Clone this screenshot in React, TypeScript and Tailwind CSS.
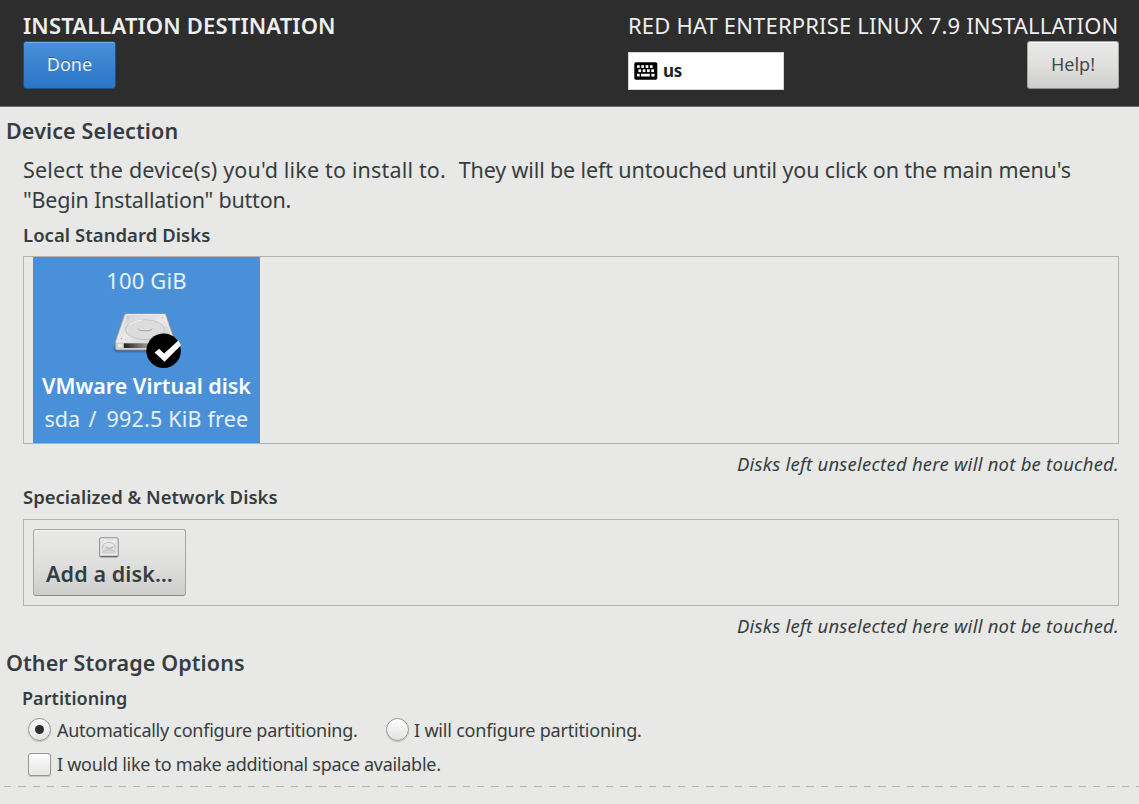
function KeyboardIcon() {
  const top = [0, 1, 2, 3];
  return (
    <svg className="shrink-0" width="24" height="18" viewBox="0 0 24 18">
      <rect x="0.3" y="0.3" width="23" height="17.4" rx="1.6" fill="#000" />
      <g fill="#fff">
        {top.map((i) => (
          <rect key={i} x={3 + i * 4.3} y="3.2" width="2.7" height="2.7" />
        ))}
        {top.map((i) => (
          <rect key={i} x={4.4 + i * 4.3} y="7.3" width="2.7" height="2.8" />
        ))}
        <rect x="3" y="11.8" width="2.7" height="2.7" />
        <rect x="7" y="11.8" width="8.8" height="2.7" />
        <rect x="17.4" y="11.8" width="3.2" height="2.7" />
      </g>
    </svg>
  );
}

function SelectedDiskIcon() {
  return (
    <svg className="block" width="76" height="62" viewBox="109 309 76 62">
      <defs>
        <linearGradient id="lid" x1="0" y1="0" x2="1" y2="1">
          <stop offset="0" stopColor="#cfcfcf" />
          <stop offset="0.5" stopColor="#e9e9e9" />
          <stop offset="1" stopColor="#c4c4c4" />
        </linearGradient>
        <linearGradient id="slot" x1="0" y1="0" x2="1" y2="0">
          <stop offset="0" stopColor="#222" />
          <stop offset="1" stopColor="#aaa" />
        </linearGradient>
        <filter id="soft" x="-20%" y="-100%" width="140%" height="300%">
          <feGaussianBlur stdDeviation="1.2" />
        </filter>
      </defs>
      <rect x="114.5" y="345" width="62" height="6.5" rx="2" fill="#1c3a5c" opacity="0.7" filter="url(#soft)" />
      <path
        d="M126 313.6h38.5q1.2 0 1.7 1.2l8.600 25.500v8q0 1.800-1.800 1.800h-56q-1.800 0-1.800-1.800v-7l9-26.300q.5-1.400 1.800-1.400z"
        fill="#d6d6d6"
        stroke="#85888b"
        strokeWidth="0.8"
      />
      <path d="M126.5 314.5h37.6l9.4 27.8h-56.6z" fill="url(#lid)" stroke="#f3f3f3" strokeWidth="0.8" />
      <ellipse cx="145" cy="329.6" rx="19.5" ry="10" fill="#dcdcdc" stroke="#bcbcbc" strokeWidth="0.8" />
      <path d="M129 325q5-4.6 14-5" fill="none" stroke="#f0f0f0" strokeWidth="1.2" />
      <path d="M138 328.6q0 2.2 7 2.2t7.4-2.2" fill="none" stroke="#9c9c9c" strokeWidth="0.9" />
      <circle cx="128" cy="318" r="0.7" fill="#aaa" />
      <circle cx="162.5" cy="318" r="0.7" fill="#aaa" />
      <circle cx="121.5" cy="338.5" r="0.8" fill="#aaa" />
      <path d="M116.4 342.8h57.5v5.4h-57.5z" fill="#bdbdbd" />
      <path d="M117.5 343.6h5v4h-5z" fill="#e8e8e8" />
      <path d="M124 343.4h27v4.6h-27z" fill="url(#slot)" />
      <circle cx="163.6" cy="350.8" r="17.3" fill="#000" />
      <path d="M154.6 352.4l4.5-3.7 5 4.7 14.3-12.9 2.6 4.7-16.500 16.500z" fill="#fff" />
    </svg>
  );
}

function SmallDiskIcon() {
  return (
    <svg className="-ml-[2px] block" width="20" height="21" viewBox="0 0 20 21">
      <defs>
        <linearGradient id="smallLid" x1="0" y1="0" x2="0" y2="1">
          <stop offset="0" stopColor="#f6f6f6" />
          <stop offset="1" stopColor="#d2d2d2" />
        </linearGradient>
      </defs>
      <rect x="0.6" y="0.8" width="18.6" height="19.2" rx="2" fill="#f1f1f1" stroke="#8c8e8c" strokeWidth="1.1" />
      <path d="M2 19.4h16" stroke="#6c6e6c" strokeWidth="1.4" />
      <rect x="3" y="3" width="13.8" height="13.6" rx="1" fill="url(#smallLid)" stroke="#d0d0d0" strokeWidth="0.8" />
      <path d="M3.8 11.5V9.5Q4.8 5.5 10 5.5t6 4V11.5" fill="none" stroke="#b9b9b9" />
      <path d="M7 9.5q0 1.700 3 1.700t4-1.700" fill="none" stroke="#a9a9a9" />
      <path d="M4 15q1.500-2.600 6-2.300t6 2.300" fill="none" stroke="#bebebe" />
    </svg>
  );
}

const lightButton =
  "rounded-[3px] border border-[#a5a6a3] border-b-[#8e8f8c] bg-linear-to-b from-[#e9e9e8] via-[#e0e0df] to-[#cdcdcb] shadow-[inset_0_1px_0_#f7f7f7]";

function Radio({ checked }: { checked?: boolean }) {
  return (
    <span className="-mt-px flex size-[23px] shrink-0 items-center justify-center rounded-full border border-[#949692] bg-linear-to-b from-[#fdfdfd] to-[#e3e3e2] shadow-[0_1px_1px_#c4c4c2]">
      {checked && <span className="size-[9px] rounded-full bg-[#2a3033]" />}
    </span>
  );
}

export default function App() {
  return (
    <div className="flex h-[804px] w-[1139px] flex-col overflow-hidden bg-[#e8e8e6] font-['Noto_Sans',sans-serif] text-[#363d40]">
      <header className="flex h-[107px] shrink-0 justify-between border-b border-[#6c6c6b] bg-[#2d2d2d] pt-[10px] pr-5 pl-[23px] text-[#efefef]">
        <div>
          <h1 className="text-[22px] leading-[30px] font-semibold tracking-[0.15px] whitespace-nowrap">
            INSTALLATION DESTINATION
          </h1>
          <button className="mt-px block h-12 w-[93px] rounded-[3px] border border-[#1c5187] bg-linear-to-b from-[#4a90d9] to-[#2a76c6] pb-[2px] text-[18px] leading-[44px] text-[#e9f1fa] shadow-[inset_0_1px_0_#76ace4] [text-shadow:0_-1px_0_#2d609b]">
            Done
          </button>
        </div>
        <div className="w-[491px]">
          <div className="text-[22px] leading-[30px] tracking-[0.17px] whitespace-nowrap">
            RED HAT ENTERPRISE LINUX 7.9 INSTALLATION
          </div>
          <div className="mt-px flex items-start justify-between">
            <div className="mt-[11px] flex h-[38px] w-[156px] items-center gap-[5px] border border-[#d5d5d5] bg-white pl-[5px] text-[17px] font-bold text-[#222]">
              <KeyboardIcon />
              <span className="tracking-[-0.3px]">us</span>
            </div>
            <button className={`${lightButton} h-12 w-[92px] pb-[2px] text-[18px] leading-[44px] text-[#42494b]`}>
              Help!
            </button>
          </div>
        </div>
      </header>

      <main className="flex flex-col pt-[9px] pr-5 pl-[23px] whitespace-nowrap">
        <h2 className="-ml-[17px] text-[21.5px] leading-[30px] font-semibold tracking-[0.12px]">Device Selection</h2>
        <div className="mt-[9px] text-[21.5px] leading-[30px]">
          <p className="flex justify-between pr-[48px]">
            <span className="tracking-[0.17px]">Select the device(s) you'd like to install to.</span>
            <span className="tracking-[-0.13px]">They will be left untouched until you click on the main menu's</span>
          </p>
          <p className="tracking-[-0.22px]">"Begin Installation" button.</p>
        </div>

        <h3 className="mt-2 text-[18.5px] leading-6 font-semibold tracking-[0.05px]">Local Standard Disks</h3>
        <section className="mt-[9px] flex h-[188px] border border-[#b3b4b1] pl-[9px]">
          <div className="flex w-[227px] flex-col items-center bg-[#4a90d9] pt-[9px] text-[21.5px] leading-[30px] text-[#e8f1fb]">
            <span className="-mt-px pb-px text-[22px] tracking-[0.15px]">100 GiB</span>
            <div className="mt-[13px] h-[62px]">
              <SelectedDiskIcon />
            </div>
            <span className="font-semibold tracking-[-0.03px] text-white">VMware Virtual disk</span>
            <span className="mt-[3px] flex">
              <span className="w-[44px]">sda</span>
              <span className="w-[18px]">/</span>
              <span className="tracking-[0.2px]">992.5 KiB free</span>
            </span>
          </div>
        </section>
        <p className="mt-2 text-right text-[18.5px] leading-6 tracking-[0.23px] italic">
          Disks left unselected here will not be touched.
        </p>

        <h3 className="mt-[9px] text-[18.5px] leading-6 font-semibold">
          Specialized &amp; Network Disks
        </h3>
        <section className="mt-[10px] flex h-[87px] border border-[#b3b4b1] pt-[9px] pl-[9px]">
          <button className={`${lightButton} flex h-[67px] w-[153px] flex-col items-center pt-[7px]`}>
            <SmallDiskIcon />
            <span className="mt-px text-[21.5px] leading-[30px] font-semibold tracking-[0.1px]">Add a disk…</span>
          </button>
        </section>
        <p className="mt-2 text-right text-[18.5px] leading-6 tracking-[0.23px] italic">
          Disks left unselected here will not be touched.
        </p>

        <h2 className="mt-[10px] -ml-[17px] text-[21.5px] leading-[30px] font-semibold tracking-[0.1px]">
          Other Storage Options
        </h2>
        <h3 className="mt-2 -ml-px text-[18px] leading-6 font-semibold tracking-[0.05px]">Partitioning</h3>
        <div className="mt-2 flex h-6 items-center pl-[5px] text-[18px] leading-6">
          <label className="flex w-[358px] items-center gap-[6px] tracking-[-0.26px]">
            <Radio checked />
            Automatically configure partitioning.
          </label>
          <label className="flex items-center gap-[5px] tracking-[-0.2px]">
            <Radio />
            I will configure partitioning.
          </label>
        </div>
        <label className="mt-[10px] flex h-6 items-center gap-[6px] pl-[5px] text-[18px] leading-6 tracking-[-0.27px]">
          <span className="size-[23px] shrink-0 rounded-[3px] border border-[#949692] bg-linear-to-b from-[#fbfbfb] to-[#e6e6e5] shadow-[0_1px_1px_#c4c4c2]" />
          I would like to make additional space available.
        </label>
      </main>
      <div className="mt-[10px] ml-1 h-px shrink-0 bg-[repeating-linear-gradient(to_right,#b4b5b2_0_7.4px,transparent_7.4px_14.33px)]" />
    </div>
  );
}
